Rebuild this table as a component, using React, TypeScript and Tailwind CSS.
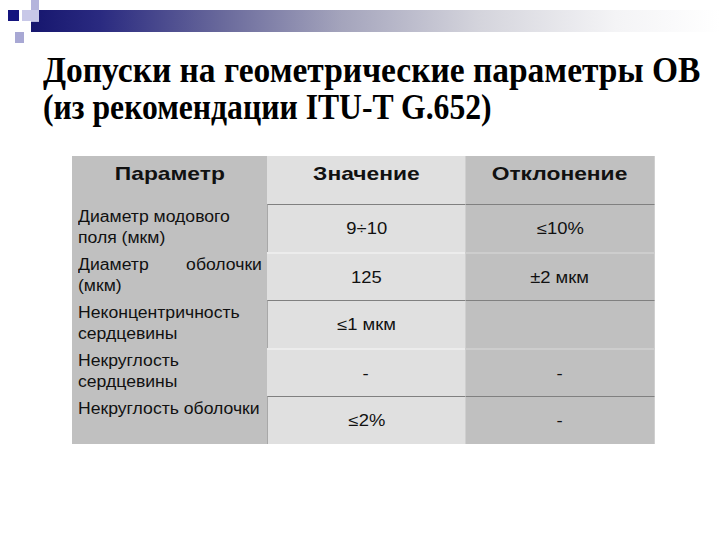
import React from "react";

type Row = { p: React.ReactNode; v: string; d: string; top: "dark" | "light" };

const S = ({ children }: { children: React.ReactNode }) => (
  <span className="inline-block scale-x-[1.1] origin-left whitespace-nowrap">{children}</span>
);
const C = ({ children }: { children: React.ReactNode }) => (
  <span className="inline-block scale-x-[1.15] origin-center whitespace-nowrap">{children}</span>
);

const rows: Row[] = [
  { p: <><S>Диаметр модового</S><br /><S>поля (мкм)</S></>, v: "9÷10", d: "≤10%", top: "dark" },
  {
    p: (
      <>
        <div className="flex justify-between pr-[1px]">
          <S>Диаметр</S>
          <span className="inline-block scale-x-[1.1] origin-right">оболочки</span>
        </div>
        <S>(мкм)</S>
      </>
    ),
    v: "125",
    d: "±2 мкм",
    top: "light",
  },
  { p: <><S>Неконцентричность</S><br /><S>сердцевины</S></>, v: "≤1 мкм", d: "", top: "dark" },
  { p: <><S>Некруглость</S><br /><S>сердцевины</S></>, v: "-", d: "-", top: "light" },
  { p: <S>Некруглость оболочки</S>, v: "≤2%", d: "-", top: "dark" },
];

export default function App() {
  return (
    <div className="w-[720px] h-[540px] bg-white relative overflow-hidden">
      {/* decoration */}
      <div className="absolute left-[31px] top-[10px] w-[689px] h-[22px] bg-[linear-gradient(to_right,#16166e_0%,#2a2a80_10%,#6a6a9c_28%,#a4a4bc_45%,#d4d4dc_65%,#f4f4f6_85%,#ffffff_100%)]" />
      <div className="absolute left-[31px] top-0 w-[8px] h-[22px] bg-[#b4b4dc]" />
      <div className="absolute left-[22px] top-[10px] w-[17px] h-[11px] bg-[#c8c8e8]" />
      <div className="absolute left-[8px] top-[10px] w-[11px] h-[11px] bg-[#14147e]" />
      <div className="absolute left-[15px] top-[32px] w-[9px] h-[11px] bg-[#a8a8d4]" />

      <div className="pt-[52px] pl-[43px] font-['Liberation_Serif','Times_New_Roman',serif] font-bold text-[36px] leading-[37px] text-black">
        <div className="whitespace-nowrap">
          <span className="inline-block scale-x-[0.93] origin-left">Допуски на геометрические параметры ОВ</span>
        </div>
        <div className="whitespace-nowrap">
          <span className="inline-block scale-x-[0.88] origin-left">(из рекомендации ITU-T G.652)</span>
        </div>
      </div>

      <div className="ml-[72px] mt-[30px] w-[583px] font-['Liberation_Sans',Arial,sans-serif] text-[#111]">
        <div className="grid grid-cols-[195px_198px_190px] h-[48px] font-bold text-[19px] leading-[24px]">
          <div className="bg-[#c0c0c0] text-center pt-[6px]">
            <span className="inline-block scale-x-[1.2]">Параметр</span>
          </div>
          <div className="bg-[#e0e0e0] text-center pt-[6px]">
            <span className="inline-block scale-x-[1.2]">Значение</span>
          </div>
          <div className="bg-[#c0c0c0] text-center pt-[6px] border-l border-r border-[#cfcfcf]">
            <span className="inline-block scale-x-[1.2]">Отклонение</span>
          </div>
        </div>
        {rows.map((r, i) => (
          <div key={i} className="grid grid-cols-[195px_198px_190px] h-[48px] text-[16px] leading-[21px]">
            <div className="bg-[#c0c0c0] pl-[6px] pr-[4px] pt-[2px]">{r.p}</div>
            <div
              className={
                "bg-[#e0e0e0] flex items-center justify-center " +
                (r.top === "dark" ? "border-t border-t-[#808080] border-l border-l-[#a8a8a8]" : "border-t-2 border-t-[#ececec]")
              }
            >
              <C>{r.v}</C>
            </div>
            <div
              className={
                "bg-[#c0c0c0] flex items-center justify-center border-l border-r border-l-[#cfcfcf] border-r-[#cfcfcf] " +
                (r.top === "dark" ? "border-t border-t-[#808080]" : "border-t-2 border-t-[#cdcdcd]")
              }
            >
              <C>{r.d}</C>
            </div>
          </div>
        ))}
      </div>
    </div>
  );
}
